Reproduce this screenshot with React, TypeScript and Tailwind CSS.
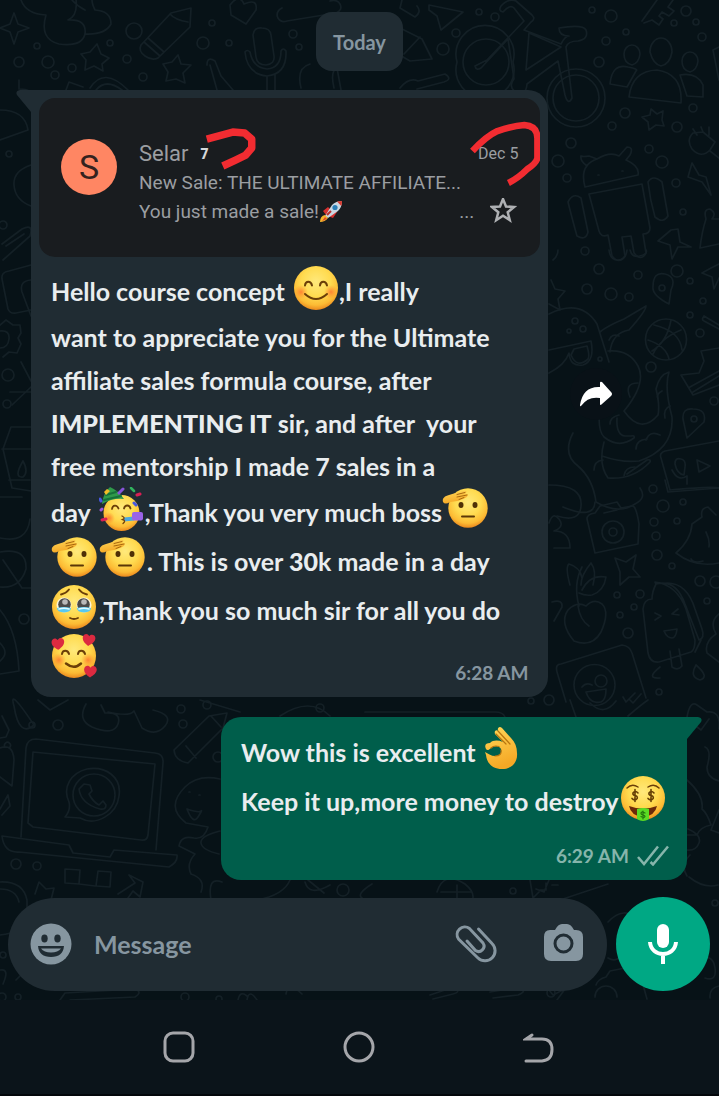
import React from "react";

type EmojiName =
  | "smile"
  | "party"
  | "salute"
  | "tears"
  | "hearts"
  | "money";

const labels: Record<EmojiName, string> = {
  smile: "😊",
  party: "🥳",
  salute: "🫡",
  tears: "🥹",
  hearts: "🥰",
  money: "🤑",
};

function EmojiDefs() {
  return (
    <svg className="absolute h-0 w-0" aria-hidden="true">
      <defs>
        <radialGradient id="skin" cx="50%" cy="36%" r="66%">
          <stop offset="0" stopColor="#ffe97c" />
          <stop offset="0.5" stopColor="#ffdb50" />
          <stop offset="0.8" stopColor="#fcbb34" />
          <stop offset="1" stopColor="#e8801a" />
        </radialGradient>
        <radialGradient id="blush">
          <stop offset="0" stopColor="#ff6a2c" stopOpacity="0.75" />
          <stop offset="1" stopColor="#ff8a2c" stopOpacity="0" />
        </radialGradient>
        <linearGradient id="hand" x1="0" y1="0" x2="0.3" y2="1">
          <stop offset="0" stopColor="#ffd85a" />
          <stop offset="1" stopColor="#f5a825" />
        </linearGradient>
        <path
          id="heart"
          d="M6 12.500C2 10 -.5 7 .2 3.800C.8 .5 4.800 -.3 6.400 2.800C8.200 0 12.200 .8 12.700 4C13.100 7.500 10 10.300 6 12.500Z"
        />
      </defs>
    </svg>
  );
}

function Emoji({ name }: { name: EmojiName }) {
  return (
    <svg
      role="img"
      aria-label={labels[name]}
      viewBox="0 0 46 46"
      className="size-[46px] shrink-0 self-start"
      fill="none"
      strokeLinecap="round"
    >
      {name === "smile" && (
        <>
          <circle cx="23" cy="22" r="22" fill="url(#skin)" />
          <circle cx="8" cy="26" r="7" fill="url(#blush)" />
          <circle cx="38" cy="26" r="7" fill="url(#blush)" />
          <path
            d="M12 19.500c.5-5 6-5 7 0M27 19.500c.5-5 6-5 7 0"
            stroke="#6b3f08"
            strokeWidth="2"
          />
          <path d="M12 28q11 10 22 0" stroke="#6b3f08" strokeWidth="2" />
        </>
      )}
      {name === "party" && (
        <>
          <circle cx="22.500" cy="26" r="18" fill="url(#skin)" />
          <circle cx="10" cy="31" r="6" fill="url(#blush)" />
          <path
            d="M13 22c.5-4.500 5-4.500 6.500-.5M25 21.500c1-4 5.500-4 6.500 0"
            stroke="#6b3f08"
            strokeWidth="1.800"
          />
          <path d="M3 16Q5 5 11 0Q20 4 25 12Q13 11 3 17Z" fill="#2f9a4a" />
          <path d="M7 8l10-3M5 13l17-4" stroke="#17703a" strokeWidth="2" />
          <path d="M5 5l3-3 3 2-4 4z" fill="#f3bd27" />
          <path d="M25 30.500v4l10-1v-4z" fill="#4ba6df" />
          <path d="M23 29q4 2 .5 3.500 4 1 .5 4" stroke="#74420a" strokeWidth="1.300" />
          <rect x="33" y="25" width="11" height="8.500" rx="2" fill="#9a63e8" />
          <path d="M20 6l4-4" stroke="#8754d8" strokeWidth="3" />
          <path d="M32 1l3 3" stroke="#31b45e" strokeWidth="2.500" />
          <path d="M38 8l3-1M3 33l4-1" stroke="#d81f55" strokeWidth="3" />
          <path d="M35 16l2 2M1 12l1 2" stroke="#4758e0" strokeWidth="3" />
          <path d="M2 23l1-1" stroke="#9b58dd" strokeWidth="3" />
        </>
      )}
      {name === "salute" && (
        <>
          <circle cx="26" cy="21" r="19.700" fill="url(#skin)" />
          <ellipse cx="19" cy="18" rx="2.500" ry="3" fill="#4f3006" />
          <ellipse cx="33" cy="18" rx="2.500" ry="3" fill="#4f3006" />
          <path d="M20 29.500h12" stroke="#5b3707" strokeWidth="2" />
          <path
            d="M1 15C0 11 3 9 7 8L20 4C25 3 26 5 23 6.500L26 7.500Q26 10 21 12Q15 15 8 15Q3 18 1 15Z"
            fill="url(#hand)"
          />
          <path
            d="M15 7.500l8-2M15 10l10-2M17 12.500l5-2"
            stroke="#a9680d"
            strokeWidth="1"
          />
        </>
      )}
      {name === "tears" && (
        <>
          <circle cx="23" cy="22" r="22" fill="url(#skin)" />
          <circle cx="13" cy="20" r="7.500" fill="#fff6da" />
          <circle cx="33" cy="20" r="7.500" fill="#fff6da" />
          <circle cx="13.500" cy="19.500" r="6.300" fill="#4b4a49" />
          <circle cx="32.500" cy="19.500" r="6.300" fill="#4b4a49" />
          <circle cx="14" cy="17" r="2.800" fill="#b9b9b9" />
          <circle cx="33" cy="17" r="2.800" fill="#b9b9b9" />
          <path
            d="M6 23q7-2 14 0q0 4-7 4.500Q6 27 6 23ZM26 23q7-2 14 0q0 4-7 4.500Q26 27 26 23Z"
            fill="#58c8f0"
          />
          <path
            d="M8 24q5-1.500 10 0M28 24q5-1.500 10 0"
            stroke="#e1fbff"
            strokeWidth="1.500"
          />
          <path
            d="M10 9.500q5-1 8-5M36 9.500q-5-1-8-5M19 33q4 2 8 0"
            stroke="#6b3f08"
            strokeWidth="1.800"
          />
        </>
      )}
      {name === "hearts" && (
        <>
          <circle cx="23" cy="22" r="22" fill="url(#skin)" />
          <circle cx="8" cy="26" r="7" fill="url(#blush)" />
          <circle cx="37" cy="26" r="7" fill="url(#blush)" />
          <path
            d="M11 20c.5-4.500 6-4.500 7 0M27 20c.5-4.500 6-4.500 7 0"
            stroke="#6b3f08"
            strokeWidth="2"
          />
          <path d="M15 29.500q8 6.500 15 0" stroke="#6b3f08" strokeWidth="2.500" />
          <use href="#heart" transform="translate(0 4) rotate(-6)" fill="#dc2a40" />
          <use href="#heart" transform="translate(32 -1) rotate(4)" fill="#dc2a40" />
          <use href="#heart" transform="translate(33 31)" fill="#dc2a40" />
        </>
      )}
      {name === "money" && (
        <>
          <circle cx="23" cy="22" r="22" fill="url(#skin)" />
          <path
            d="M7 12q5-5 11-1M28 11q6-4 11 1"
            stroke="#6b3f08"
            strokeWidth="1.500"
          />
          <path
            d="M18 17q-2-2.300-4-1c-2.300 1.500-1 3.200 1.200 3.600s3.200 2.400.8 4q-2.400.8-4-1.200M15 13.500v12M34 17q-2-2.300-4-1c-2.300 1.500-1 3.200 1.200 3.600s3.200 2.400.8 4q-2.400.8-4-1.200M31 13.500v12"
            stroke="#664005"
            strokeWidth="1.600"
          />
          <path d="M9 30q14 5 28 0q-2 10-14 11Q11 40 9 30Z" fill="#6b2a09" />
          <path d="M17 33q6-2 12 0v10q-6 4-12 0Z" fill="#5bdc24" />
          <path
            d="M25 37q-4-2-4 .5c0 2 4 1 4 3q-1 2-4 0M23 35v8"
            stroke="#23780f"
            strokeWidth="1.200"
          />
        </>
      )}
    </svg>
  );
}

function OkHand() {
  return (
    <svg
      role="img"
      aria-label="👌"
      viewBox="0 0 46 46"
      className="size-[46px] shrink-0 self-start"
      fill="none"
      strokeLinecap="round"
    >
      <path
        fillRule="evenodd"
        d="M2 22C0 18 2 16 6 16C9 13 14 13 19 15L11 7C10 4 12 2 14 4C13 0 16-1 18 1L27 11C31 15 33 20 33 26C34 36 27 42 18 42C9 42 3 37 2 28L1 25C5 27 7 29 11 29C16 29 18 26 17 22C15 18 10 19 7 21C5 23 3 24 2 22Z"
        fill="url(#hand)"
      />
      <path
        d="M14 4l12 13M12 7l10 10M7 21q3-3 8-1.500M11 29q7 0 6-6"
        stroke="#b9750e"
        strokeWidth="1.200"
      />
    </svg>
  );
}

function Rocket() {
  return (
    <svg role="img" aria-label="🚀" viewBox="0 0 24 24" className="size-6">
      <path d="M4 11l5-4 3 3-5 5zM14 18l4-6-5-1-4 5z" fill="#d5312f" />
      <path d="M6 16L13 5Q17 1 23 1Q23 7 19 11L9 18Z" fill="#c9d7e2" />
      <path d="M18 1.500L23 1q0 3-.7 5z" fill="#d8392f" />
      <path d="M6 15q-5 1-5 7 5 0 8-4z" fill="#f6b32c" />
      <path d="M6 17l-3 4 5-2z" fill="#e3492a" />
      <circle cx="16" cy="7.500" r="2.600" fill="#2b7fb8" />
      <path d="M8 15l4-4" stroke="#b82e2c" strokeWidth="2" />
    </svg>
  );
}

const bubbles = [
  [37, 46, 3], [19, 62, 5], [48, 62, 6], [55, 75, 4], [72, 68, 4], [134, 31, 8],
  [110, 43, 3], [127, 59, 4], [143, 77, 4], [203, 43, 6], [212, 23, 3], [229, 43, 3],
  [293, 34, 4], [299, 47, 3], [479, 12, 3], [495, 17, 4], [456, 33, 4], [443, 49, 6],
  [592, 10, 3], [611, 16, 6], [626, 32, 3], [606, 41, 4], [599, 62, 5], [686, 11, 5],
  [674, 23, 3], [696, 22, 3], [702, 37, 4], [625, 113, 5], [612, 126, 4], [693, 108, 4],
  [677, 127, 5], [571, 143, 5], [558, 161, 6], [567, 178, 4], [649, 149, 4], [662, 162, 6],
  [676, 183, 4], [683, 212, 3], [585, 251, 4], [599, 269, 5], [587, 289, 5], [611, 294, 6],
  [629, 297, 4], [638, 275, 4], [677, 271, 6], [690, 281, 3], [703, 301, 3], [690, 315, 3],
  [700, 333, 4], [651, 367, 5], [714, 401, 4], [653, 489, 4], [663, 506, 6], [683, 502, 3],
  [654, 522, 4], [656, 536, 4], [677, 521, 3], [657, 555, 5], [672, 566, 3], [617, 595, 3],
  [640, 594, 4], [634, 607, 3], [620, 615, 3], [628, 633, 5], [700, 581, 5], [716, 582, 6],
  [707, 601, 3], [549, 700, 5], [531, 701, 3], [659, 692, 3], [9, 154, 3], [3, 225, 4],
  [8, 375, 6], [7, 404, 4], [24, 619, 5], [32, 725, 3], [58, 725, 5], [181, 709, 4],
  [207, 705, 4], [183, 724, 4], [320, 708, 4], [218, 757, 5], [16, 864, 5], [37, 866, 4],
  [3, 955, 3], [2, 997, 4], [18, 997, 3], [185, 997, 4], [219, 999, 3], [343, 890, 6],
  [513, 891, 3], [715, 903, 3], [551, 993, 4], [692, 941, 4], [575, 321, 3], [569, 331, 2],
  [583, 329, 3], [600, 359, 2],
];

const doodlePaths = [
  "M14 13l4 11 11 4-11 4-4 12-4-12-10-4 10-4zM21 0q5 14 25 15q-7 24 13 29q23 3 26-10q2-15-17-14q10-4 8-21M72 0q5 6 13 10M85 34q20 1 26-10q0-13-16-14q-3-6-3-10",
  "M141 45l30-32 20-5-1 19-32 31q-6 3-13-2t-4-11M148 38l16 14M144 42l16 14M170 14q5 6 18 8",
  "M230 5q9-12 14-1q14-6 12 6l-10 14-15-9z",
  "M282 8q-7 4-4 10q3 5 9 3l49-8q7-3 4-9q-3-5-10-3M253 35q1-8 9-7q8 0 9 7l3 21q1 8-8 9q-9 0-10-8zM245 52q2 22 22 24q20-2 19-25q-3-4-5 0q0 17-14 18q-14-1-17-17q-3-3-5 0M267 76v14M275 75v15",
  "M97 44l4 10 8 4-7 6 1 7-9-5-9 4 1-10-5-6 9-2zM178 55l3 9 10 1-8 8 2 10-9-4-10 2 2-9-5-8 9-2zM207 65q0-9 8-4l6 15 12 14M217 90l-7-25M66 90l3-8 14 5M90 88q14-22 38 2M96 90q10-12 26 0M19 80v9q15 0 10 8M0 110q25 0 28 20L0 140M31 165q-18 6-17 20q1 15 17 21M2 244l20-15q12-6 8 7L3 260M6 246l18-12",
  "M301 88q-5-20 9-24M334 88q-4-17 3-20l4 22M400 88q9-11 18-7l27-7q8 5-1 8l-27 7M402 0l-2 8 15 9q7-5 2-11M429 5l34 7-22 18-4-14-8-6zM402 29l20 10 10 20-22 2-12-7M404 54l16-17",
  "M457 62a29 29 0 1 1 56 0a29 29 0 1 1-56 0M463 62a22 22 0 1 1 46 0a22 22 0 1 1-46 0M547 98a29 29 0 1 1 58 0a29 29 0 1 1-58 0M553 98a22 22 0 1 1 46 0a22 22 0 1 1-46 0",
  "M487 60l37-39-10-13q-4-4-11 4q-5-1-2-6q7-8 15-5l16 14q4 4-1 7l-7 8 37 14q4-8 8-8-10 0-10-8q24-4 27 2q3 9-8 11q-10 0-12 6l6 51q-4 8-7-3l-7-34-31 23q-1 13-12 8q-7-6-1-13l-6-40-27 29q-5 3-6-2zM529 33l-3 37 35-23z",
  "M642 21l15-21M673 0l-5 7 6 4-5 5-7-4-3 4 4 3-4 6-7-5-8 3",
  "M650 52a11 14 0 1 1 22 0q-2 12-11 14q-8-2-11-14M624 54a8 9 0 1 1 16 0q-1 9-8 11q-8-2-8-11M682 61a8 9 0 1 1 16 0q-1 9-8 11q-8-2-8-11M629 97q3-26 28-27q26 4 24 33zM610 84q2-21 18-17q11 2 8 4l-9 16zM680 75q17-3 23 10v12l-16-1zM719 47l-6 3 6 30",
  "M651 109l6 5 6-3-1 9 2 6-8-1-7 5-1-8-6-5 8-2z",
  "M585 187q-6-22 12-28l-8-3q-6 1-8 0q-1 5 6 10M597 159q13-8 22-3l8-9q7 0 3 8l-4 5q14 6 12 15l-53 12M598 175h1M622 171h1M589 194l53-10 8 44q0 6-7 6l3 19q-5 9-12 0l-3-17-9 1 3 19q-6 9-13 0l-4-21q-7 3-9-4zM568 202q5-10 13-4l7 34q-2 9-11 4q-4-14-9-34M648 182q5-8 14 0l6 34q-5 8-13 1q-5-17-7-35",
  "M693 133q-7 7-1 16q9 10 18 1l5-8-12-10zM697 135l-4-6M703 132l-2-5M709 135l0-8M710 151l9 7M692 163l-4 14 14 5 9 13-5-18-7-2zM671 230l-13 11 12 4 2 14 6-12 13 0-11-5-2-13zM700 248q2-17 6-29q-3-10 4-10q7 4 2 10h7M700 248l19-4",
  "M719 264l-8 4-9 5 10 4 2 12 5-11M653 287q0-16 12-13q12 3 6 16l-2 14q-17-9-16-17M659 288a3 3 0 1 1 6 0a3 3 0 1 1-6 0M551 280l4 9 10 2-7 8 2 11-11-6M553 260q5-4 5-10M609 250q1 10 9 10t9-10M630 250q2 8 10 6t6-6",
  "M549 314q32-16 48 10l12 38M600 332q7-6 24-13l22-13q0 5-17 24q-17 3-19 22M608 351q21-2 30 15t-14 45q17 24 34 4q2-10-2-26q3-14 13-17q-5 15 3 45q2 32-33 44q-17 2-37-5M600 405q-3 25 4 32q15 12 30 1q1-3-3-2l-6 0q-9-1-8-18M604 442q-6 22 4 36q25 2 42-16q1-3-3-2l-20 14M573 433q-11 21 5 33q15 13 18 36q22 13 39 2q12-6 5-16",
  "M549 350l42-9q4 20-8 24q-13 2-14-12-4 12-20 20M571 355q6 14 17 4q2-3-1-13l-13 3zM609 340q3-7 10-4M638 383q-14 0-8 14M662 391q-6 3-4 8M670 406q-7 3-5 12M610 424q0-7 9-9M636 449q0-9 11-10M646 440q4-10 14-5M594 470q0-9 9-10M624 476q1-9 11-9",
  "M666 319a20 20 0 1 1 0 41a20 20 0 1 1 0-41M671 320q-4 22-19 31M654 325q26 6 28 25M681 330q-20 8-28 24M648 340q18 6 21 19M704 316l15 9M704 316q-3 4 0 5l15 8M719 348l-18 3 3 10-5 12-18 2 12 20 26-10M690 387l29-16M693 392l26-16",
  "M683 419q-1-11 10-10q14 0 11 13l-17 16zM691 419a3 3 0 1 1 6 0a3 3 0 1 1-6 0M661 458q-2-5 4-7l54-10M661 458l9 32q42-4 49-2M675 464q0-7 6-5q5 1 4 8l-1 8q-7-1-9-11M672 470q6 12 15 6v8M697 460l2 12 11-6z",
  "M549 485q34 0 32 21q-1 17-24 10M563 507q31 13 32-5M665 480l3 12 51-4M587 519q0-5 8-6l5-7 17-4 4 6 11-2q4-1 7 18l-1 20-43 9zM604 513l13-3M602 532a11 11 0 1 1 22 0a11 11 0 1 1-22 0M609 532a4 4 0 1 1 8 0a4 4 0 1 1-8 0M676 553q15-13 16-29l10-7q-2-9 6-10l8 8M676 553q19 15 43 10M691 559q3 5 12 2M706 532q4 8 3 15M615 558l11 4 10-7-3 14 7 8-11 0-9 8 0-13z",
  "M586 606q8-8 16-2 8 8-1 28-9 16-27 9-15-18-6-31 9-9 18-4M579 606q-6-22 3-39M570 585q-5-18-1-21 11 3 13 14M581 585q0-10 10-22 6 8 2 22M582 590q8-16 24-13-2 14-14 18-7 1-13-2M578 606q2 14 11 20M549 523q4-12 10-4t-5 12q16 0 16 17h-16M552 602q11-3 10 5l-8 14",
  "M656 584q-4 8-4 15-8 0-9 10l5 44q2 10 11 9l32-10q4-2 4-12l-9-31q-9-24-31-27zM656 584q20-5 29 20l14 36q6-2 3-11l-7-20q-8-26-28-26M695 652l6-12M670 651l2 16q6 4 10-1l-3-17M655 613l6 3-6 4M678 609l-6 5 7 1M664 631l13-2q-1 9-5 9-5 0-8-7",
  "M557 672q-2-8 4-8l61-19q8 1 10 8l14 45M557 672l9 30M574 685a20 20 0 1 1 41 0a20 20 0 1 1-41 0M582 687q4-5 10-2M595 681a6 6 0 1 1 12 0a6 6 0 1 1-12 0M586 692l20-3q0 16-11 13-6-1-9-10M623 697l3 5 9-9M630 700l3 3 8-9M660 667q-15 12 0 11M696 665q-7 12 4 15 10-3-4-15M719 614q-10 8-3 20-12 8-9 19l12 9",
  "M31 265l-22 6q-8 1-7 8l6 30q2 5 8 4l15-3M31 280q-12 1-9 12l9 24M0 325l6-5 7 5h7l1 8-3 5 3 6-4 9-8-1-6 5M0 331q10-1 9 8t-9 9M21 362l10 19M10 392h21M12 405l19-18M3 449l8-22h20M3 449l9 39 19 3M23 461q-10 17 0 16 6-5 0-16M2 449h29",
  "M0 538q27 6 30-19M9 480h21M0 497h22M0 552q27-5 26 17q-6 20-26 18M3 560l19 28M22 588l9 0M0 610q17 20 19 61L0 674M0 643q10 10 0 18M14 706q-6-20 20 19-15 13-20-19",
  "M86 704q-9 16 6 23 22 9 26-3t-13-11l-4-8M108 712q22 5 26-1l8 17q14 9 23-2t-12-16M68 700l-18 10-12-10M2 716l7 14-3 7-6 1M0 748q13-5 14 12l-2 26-12-9M0 809l8-14 2 11-8 9M5 747a3 3 0 1 1 5 0",
  "M21 837l5-89q1-9 10-9l119 14q9 1 8 10l-7 87M28 823l5-71 122 12-7 71q-1 6-7 5l-108-13zM2 836l67 9 4 8 37 4 4-7 63 5q1 7-8 12L19 852Q4 853 2 836M65 817q6-7 4-15c-7-15 2-29 18-33 19-3 35 8 32 27-2 18-23 31-39 22zM73 795a21 21 0 1 1 42 0a21 21 0 1 1-42 0M84 784l6 1 2 6-3 3q4 8 10 11l4-4 3 4q0 5-6 4-19-5-21-20zM174 750l35-34 18-3-4 15-35 35q-13-2-14-13M186 746l10 12M211 716l10 11",
  "M220 779q-22-5-35 8-20 20 1 36l22 4q-4 13-14 11-13-3-15 8l16 8q-9 10-4 20 15 5 10 18M219 854q-17-4-18-11t19-12M187 809q12 4 14 2t-3 6-11-8M189 792h1M199 795h1M65 869l15 1-1 14-14-1zM98 871l13 1-1 15-14-1zM79 884l16 2M35 894l4-12 7 7 8-1-3 12M118 894l17-11-6-8 14 7-3 15-7-6-5 7M0 882q23-1 27 18M0 889q16 0 19 13M27 900v20q-5 13-27 15M211 900q-4-24 11-18M257 900q27-5 33-20",
  "M305 882q4 15 25 3M308 880l16 13M549 880l-5 12-8-3M372 884q-16 10-10 14M437 892q7-22 28-8 11 9 7 17M441 892h30M457 885v14M530 880l3 18 6-6M540 890h6v-7M552 885h6M560 900l48-16M687 717q3-17 10-12l10 7q14-2 12 17M688 720l13 10 8-11M705 747q7 3 2 20 0 11 12 14M687 780q17 15 15 29 5 4 9 16-11 2-14 10h-10M688 829q14 6 11 14t-12 7M719 810l-8 20 8 3",
  "M690 855q-10 10-3 21M689 877q15 12 29 8M608 922q16-17 31-2M608 958q10 6 17-8M596 985q2-6 10-8l4-6 15-3 5 6 10 0 7 25M595 997a11 11 0 1 1 22 0M545 985l8 10 12-6-8 11M700 958q13-4 15 10t-10 10M719 986q-10 2-9 12M60 1000l5-7 70-4q8 3 0 8l-65 3M238 1000q2-10 9-4M247 1000q2-12 10 0M286 994q2-13 16 0M430 995l24-8q8 5-1 7l-20 5M490 992l30-5q8 4-2 8l-25 3M0 970q10-2 3 14M16 980l7-7 4 6",
  "M200 700l40 12M280 716q30-20 50 0M365 712h130q8 0 10 5M570 700l6 17M590 703q14 14 26-2M628 716q14-12 20-16",
];

function Wallpaper() {
  return (
    <svg
      aria-hidden="true"
      viewBox="0 0 719 1000"
      preserveAspectRatio="xMidYMin slice"
      className="absolute inset-0 h-full w-full"
      fill="none"
      stroke="#142026"
      strokeWidth="1.700"
      strokeLinecap="round"
      strokeLinejoin="round"
    >
      {doodlePaths.map((d) => (
        <path key={d} d={d} />
      ))}
      {bubbles.map(([x, y, r]) => (
        <circle key={`${x}-${y}`} cx={x} cy={y} r={r} />
      ))}
    </svg>
  );
}

function Line({
  children,
  tall = false,
}: {
  children: React.ReactNode;
  tall?: boolean;
}) {
  return (
    <div
      className={
        tall
          ? "flex h-[49px] items-center whitespace-pre"
          : "flex h-[43px] items-center whitespace-pre"
      }
    >
      {children}
    </div>
  );
}

function MailCard() {
  return (
    <div className="relative mx-2 flex h-[159px] gap-[22px] overflow-hidden rounded-2xl bg-[#191c1f] px-[22px] pt-[41px] font-[Roboto,sans-serif] font-normal text-[#9b9ea2]">
      <div className="flex size-14 shrink-0 items-center justify-center rounded-full bg-[#ff8663] text-[34px] text-[#35221e]">
        S
      </div>
      <div className="min-w-0 flex-1 text-[19px] leading-[29px]">
        <div className="flex items-center">
          <span className="text-[22px]">Selar</span>
          <span className="ml-3 text-sm font-black text-[#d5d7d9]">7</span>
          <span className="ml-auto text-base">Dec 5</span>
        </div>
        <div className="whitespace-nowrap">New Sale: THE ULTIMATE AFFILIATE...</div>
        <div className="flex items-center">
          You just made a sale!
          <Rocket />
          <span className="ml-auto mr-4">...</span>
          <button type="button" aria-label="Star" className="-my-2">
            <svg
              viewBox="0 0 28 28"
              className="size-7"
              fill="none"
              stroke="#aeb0b3"
              strokeWidth="2.500"
            >
              <path d="M13 1l3 7.500 8 .5-6.300 5.200 2.100 8L13 17.800 6.200 22.200l2.100-8L2 9l8-.5z" />
            </svg>
          </button>
        </div>
      </div>
      <svg
        aria-hidden="true"
        viewBox="0 0 502 159"
        className="absolute inset-0 h-full w-full"
        fill="none"
        stroke="#f22c31"
        strokeLinejoin="round"
      >
        <path
          d="M168 41L194 34L206 35L213 41L213 50L207 57Q197 62 184 68"
          strokeWidth="7.500"
        />
        <path
          d="M434 53Q448 38 459 33Q474 28 486 27Q499 28 499 40V60Q498 65 489 71Q480 80 470 85"
          strokeWidth="6.500"
        />
      </svg>
    </div>
  );
}

export default function App() {
  return (
    <div className="flex min-h-screen flex-col bg-[#0b141a] font-[Lato,sans-serif] font-bold text-[#e9edef]">
      <EmojiDefs />
      <main className="relative flex flex-1 flex-col overflow-hidden bg-[#071217] pb-[9px] pt-3">
        <Wallpaper />
        <div className="relative flex h-[59px] items-center self-center rounded-2xl bg-[#202c33] px-[17px] text-xl text-[#8696a0]">
          Today
        </div>

        <section className="relative mt-[19px] flex items-center pl-[31px]">
          <article className="relative w-[75.200%] rounded-[20px] rounded-tl-none bg-[#202c33] pb-[14px] pt-2">
            <svg
              aria-hidden="true"
              viewBox="0 0 15 22"
              className="absolute right-full top-0 h-[22px] w-[15px]"
              fill="#202c33"
            >
              <path d="M15 0H4Q-1 1 1 5L15 22Z" />
            </svg>
            <MailCard />
            <div className="mt-[9px] px-5 text-[25px] leading-8">
              <Line tall>
                <span className="mr-2">Hello course concept</span>
                <Emoji name="smile" />
                <span>,I really</span>
              </Line>
              <Line>want to appreciate you for the Ultimate</Line>
              <Line>affiliate sales formula course, after</Line>
              <Line>
                <span className="font-black">IMPLEMENTING IT</span>
                <span> sir, and after  your</span>
              </Line>
              <Line>free mentorship I made 7 sales in a</Line>
              <Line tall>
                <span className="mr-2">day</span>
                <Emoji name="party" />
                <span>,Thank you very much boss</span>
                <Emoji name="salute" />
              </Line>
              <Line tall>
                <span className="mr-[2px] flex gap-[2px] self-start">
                  <Emoji name="salute" />
                  <Emoji name="salute" />
                </span>
                <span>. This is over </span>
                <span className="font-black">30</span>
                <span>k made in a day</span>
              </Line>
              <Line tall>
                <span className="mr-[2px] self-start">
                  <Emoji name="tears" />
                </span>
                <span>,Thank you so much sir for all you do</span>
              </Line>
              <Line tall>
                <Emoji name="hearts" />
                <time className="ml-auto self-end text-[19px] leading-5 text-[#8696a0]">
                  6:28 AM
                </time>
              </Line>
            </div>
          </article>
          <button
            type="button"
            aria-label="Forward"
            className="ml-[22px] flex size-[52px] items-center justify-center rounded-full bg-[#091117]"
          >
            <svg viewBox="0 0 34 28" className="h-7 w-[34px]" fill="#fff">
              <path d="M1 25Q4 6 21 7V3Q21 1 23 2L32 12Q34 14 32 16L23 24Q21 26 21 24V18Q9 16 2 26Q1 27 1 25Z" />
            </svg>
          </button>
        </section>

        <article className="relative mr-8 mt-5 w-[64.800%] self-end rounded-[20px] rounded-tr-none bg-[#005e4b] pb-[14px] pl-5 pr-[18px] pt-[10px] text-[25px] leading-8">
          <svg
            aria-hidden="true"
            viewBox="0 0 15 22"
            className="absolute left-full top-0 h-[22px] w-[15px]"
            fill="#005e4b"
          >
            <path d="M0 0H11Q16 1 14 5L0 22Z" />
          </svg>
          <Line tall>
            <span className="mr-2">Wow this is excellent</span>
            <OkHand />
          </Line>
          <Line tall>
            <span className="mr-[2px]">Keep it up,more money to destroy</span>
            <Emoji name="money" />
          </Line>
          <div className="mt-5 flex items-center justify-end gap-2 text-[19px] leading-5 text-[#86b5ab]">
            <time>6:29 AM</time>
            <svg
              role="img"
              aria-label="Delivered"
              viewBox="0 0 32 21"
              className="h-[21px] w-8"
              fill="none"
              stroke="currentColor"
              strokeWidth="2.500"
            >
              <path d="M1 12l6 7L21 1.500M13.500 17l2.500 2.500L31 1.500" />
            </svg>
          </div>
        </article>

        <form
          className="relative mt-[17px] flex items-center gap-[9px] pl-2 pr-[9px]"
          onSubmit={(e) => e.preventDefault()}
        >
          <div className="flex h-[93px] min-w-0 flex-1 items-center rounded-full bg-[#202c33] px-[22px] text-[#8696a0]">
            <button type="button" aria-label="Emoji">
              <svg viewBox="0 0 42 42" className="size-[42px]">
                <circle cx="21" cy="21" r="20.500" fill="#8696a0" />
                <ellipse cx="14.500" cy="15.500" rx="3.200" ry="4" fill="#202c33" />
                <ellipse cx="27.500" cy="15.500" rx="3.200" ry="4" fill="#202c33" />
                <path d="M8 23h26q-1 11-13 11T8 23Z" fill="#202c33" />
                <path d="M11 25.500h20q-3 4-10 4t-10-4Z" fill="#8696a0" />
              </svg>
            </button>
            <input
              type="text"
              aria-label="Message"
              placeholder="Message"
              className="ml-[22px] min-w-0 flex-1 bg-transparent text-[25px] leading-8 outline-none placeholder:text-[#8696a0] placeholder:opacity-100"
            />
            <button type="button" aria-label="Attach">
              <svg
                viewBox="0 0 42 42"
                className="size-[42px]"
                fill="none"
                stroke="currentColor"
                strokeWidth="3"
                strokeLinecap="round"
              >
                <path d="M23.500 6L37 20.500A10 10 0 0 1 23 35L3.500 16A7.700 7.700 0 0 1 14.500 5.500L28 20A5.400 5.400 0 0 1 20.500 27.500L12 18" />
              </svg>
            </button>
            <button type="button" aria-label="Camera" className="ml-[46px]">
              <svg viewBox="0 0 42 42" className="size-[42px]">
                <path
                  d="M7 7h5q3-6 7-6h5q4 0 7 6h2q7 0 7 7v17q0 7-7 7H8q-7 0-7-7V14q0-7 6-7Z"
                  fill="#8696a0"
                />
                <circle
                  cx="20.500"
                  cy="20.500"
                  r="8.500"
                  fill="#8696a0"
                  stroke="#202c33"
                  strokeWidth="3"
                />
              </svg>
            </button>
          </div>
          <button
            type="button"
            aria-label="Record"
            className="flex size-[94px] shrink-0 items-center justify-center rounded-full bg-[#00a884]"
          >
            <svg viewBox="0 0 32 42" className="h-[42px] w-8" fill="none" stroke="#fff">
              <rect x="10" y="1" width="12" height="24" rx="6" fill="#fff" stroke="none" />
              <path d="M3 19c1 16 25 16 26 0M16 31v10" strokeWidth="4" />
            </svg>
          </button>
        </form>
      </main>

      <nav className="flex h-24 shrink-0 items-center justify-center gap-[148px] border-b-2 border-[#03070b] pr-[2px] text-[#a5a6aa]">
        <button type="button" aria-label="Recent apps">
          <svg
            viewBox="0 0 32 32"
            className="size-8"
            fill="none"
            stroke="currentColor"
            strokeWidth="3"
          >
            <rect x="2" y="2" width="28" height="28" rx="8" />
          </svg>
        </button>
        <button type="button" aria-label="Home">
          <svg
            viewBox="0 0 32 32"
            className="size-8"
            fill="none"
            stroke="currentColor"
            strokeWidth="3"
          >
            <circle cx="16" cy="16" r="14" />
          </svg>
        </button>
        <button type="button" aria-label="Back">
          <svg
            viewBox="0 0 32 32"
            className="size-8"
            fill="none"
            stroke="currentColor"
            strokeWidth="3"
            strokeLinecap="round"
          >
            <path d="M3 30h16q10-1 10-11.500T19 8H3l6-4" />
          </svg>
        </button>
      </nav>
    </div>
  );
}
